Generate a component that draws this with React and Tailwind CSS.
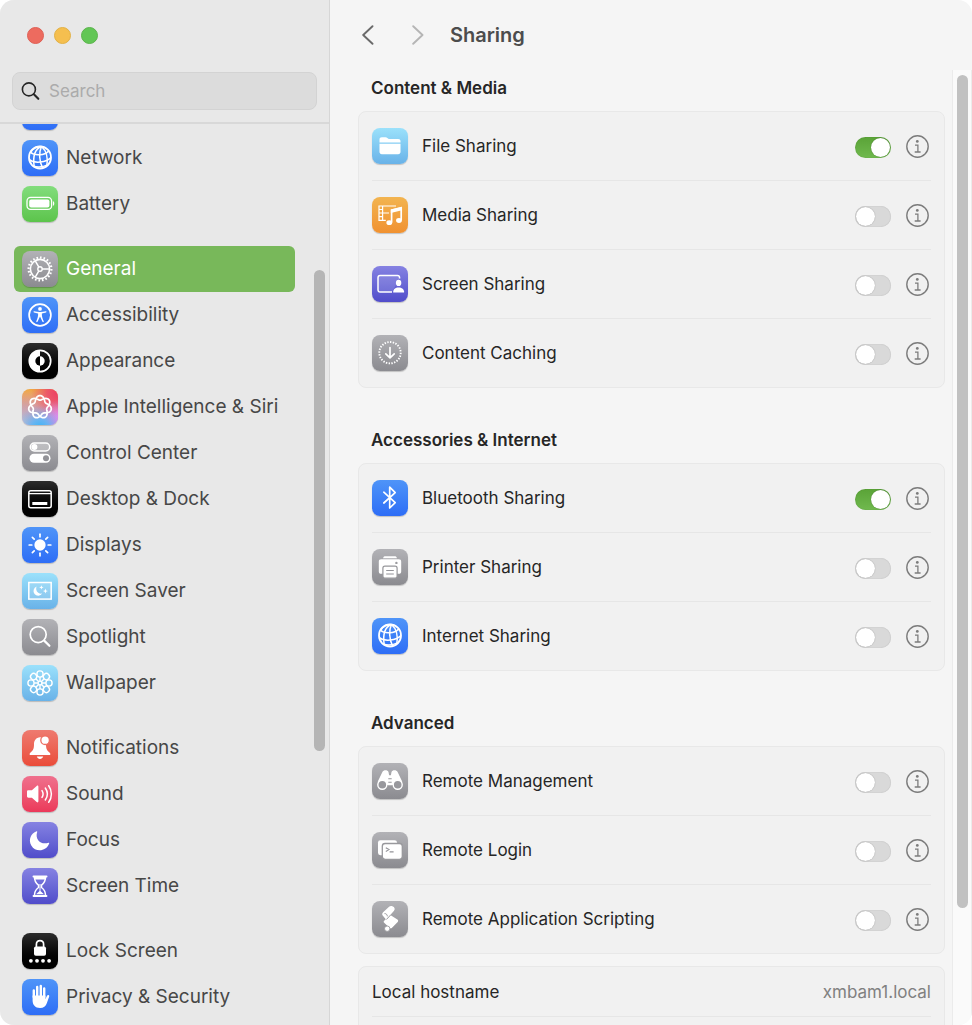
import React, { useState } from 'react';

const tones = {
  blue: 'from-[#4f94f8] to-[#2e6df6]',
  green: 'from-[#82dd7c] to-[#5cc44b]',
  gray: 'from-[#b2b2b6] to-[#8b8b90]',
  black: 'from-[#2c2c2c] to-black',
  cyan: 'from-[#9be1fb] to-[#69b2e8]',
  red: 'from-[#ee7a6f] to-[#ea4b39]',
  pink: 'from-[#ef708d] to-[#eb385a]',
  indigo: 'from-[#8682e2] to-[#514cca]',
  orange: 'from-[#f2b450] to-[#f09130]',
  siri: 'from-[#f0a93e] to-[#c77ee8]',
};

const petals = [0, 45, 90, 135, 180, 225, 270, 315];

// One curve wound twice round the centre, which crosses itself seven times
const siriPath = (() => {
  const points = [];
  for (let i = 0; i <= 168; i++) {
    const t = (i / 168) * Math.PI * 4;
    const r = 9.2 + 2.3 * Math.cos(3.5 * t);
    points.push(`${(18 + r * Math.sin(t)).toFixed(2)} ${(18 - r * Math.cos(t)).toFixed(2)}`);
  }
  return `M${points.join('L')}Z`;
})();

const Globe = () => (
  <g fill="none" stroke="white" strokeWidth="1.5">
    <circle cx="18" cy="17.5" r="11" strokeWidth="1.8" />
    <path d="M19.5 6.5C14 8.5 10.5 15 12.2 26.7M19.5 6.5C16.8 12 17 21 20.6 28M19.5 6.5C24 10.5 26.2 18 24.8 25.8M19.5 6.5C14.5 6.5 10.5 9 8.6 12" />
    <path d="M8.4 12.3C12.5 16 22.5 15.6 26.6 10.9M7.2 19.6C12 23.6 24.5 22.8 28.9 17.6M11 25.9C15 27.6 21.5 27 26.2 24.6" />
  </g>
);

const glyphs = {
  globe: <Globe />,
  bluetooth: (
    <path d="M11.8 12.2L23.2 22.6L17.7 28V7.2L23.2 12.6L11.8 23" fill="none" stroke="white" strokeWidth="1.7" strokeLinejoin="round" strokeLinecap="round" />
  ),
  battery: (
    <g fill="white">
      <rect x="5" y="11.4" width="24.6" height="12" rx="3.6" fill="none" stroke="white" strokeWidth="1.3" />
      <rect x="7.2" y="13.4" width="20.2" height="8" rx="2" />
      <path d="M31 15.2c1.7.5 1.7 4 0 4.5z" />
    </g>
  ),
  gear: (
    <g fill="none" stroke="white">
      <circle cx="18" cy="18" r="9.6" strokeWidth="1.6" />
      <circle cx="18" cy="18" r="11.4" strokeWidth="2.2" pathLength="40" strokeDasharray="0.9 1.1" />
      <circle cx="18" cy="18" r="2.2" strokeWidth="1.4" />
      <path d="M20.2 18H27.6M16.9 16.1L13.1 9.6M16.9 19.9L13.1 26.4" strokeWidth="1.5" />
    </g>
  ),
  accessibility: (
    <g fill="white">
      <circle cx="18" cy="18" r="10.9" fill="none" stroke="white" strokeWidth="1.7" />
      <circle cx="18" cy="11.9" r="1.9" />
      <path d="M12.2 14.3c-.8-.2-1 .9-.3 1.1l4.2 1.2c.3 2.4-.6 5-1.8 7.7-.3.9.8 1.3 1.2.5L18 19.6l2.5 5.2c.4.8 1.5.4 1.2-.5-1.2-2.7-2.1-5.3-1.8-7.7l4.2-1.2c.7-.2.5-1.3-.3-1.1-3.9.8-7.7.8-11.6 0z" />
    </g>
  ),
  appearance: (
    <g>
      <circle cx="18" cy="18" r="10.7" fill="none" stroke="white" strokeWidth="1.7" />
      <path d="M18 7.5a10.5 10.5 0 0 0 0 21z" fill="white" />
      <path d="M18 13.3a4.7 4.7 0 0 0 0 9.4z" fill="black" />
      <path d="M18 13.3a4.7 4.7 0 0 1 0 9.4z" fill="white" />
    </g>
  ),
  siri: (
    <g>
      <defs>
        <radialGradient id="siriRed" cx="1" cy="0.1" r="0.75">
          <stop offset="0" stopColor="#ec3f63" />
          <stop offset="0.4" stopColor="#ec4f68" stopOpacity="0.9" />
          <stop offset="1" stopColor="#ec5a62" stopOpacity="0" />
        </radialGradient>
        <radialGradient id="siriBlue" cx="0.5" cy="1.1" r="0.65">
          <stop offset="0" stopColor="#35b5f8" />
          <stop offset="0.4" stopColor="#62b6f4" stopOpacity="0.9" />
          <stop offset="1" stopColor="#8fa8dd" stopOpacity="0" />
        </radialGradient>
        <radialGradient id="siriGray" cx="0" cy="1" r="0.8">
          <stop offset="0" stopColor="#b4d3dd" />
          <stop offset="1" stopColor="#c4a89a" stopOpacity="0" />
        </radialGradient>
        <radialGradient id="siriPink" cx="1" cy="0.8" r="0.5">
          <stop offset="0" stopColor="#e58af5" />
          <stop offset="1" stopColor="#d98af0" stopOpacity="0" />
        </radialGradient>
      </defs>
      <rect width="36" height="36" fill="url(#siriRed)" />
      <rect width="36" height="36" fill="url(#siriGray)" />
      <rect width="36" height="36" fill="url(#siriPink)" />
      <rect width="36" height="36" fill="url(#siriBlue)" />
      <path d={siriPath} fill="none" stroke="white" strokeWidth="1.7" />
    </g>
  ),
  control: (
    <g>
      <rect x="8.3" y="8" width="19.4" height="8" rx="4" fill="white" fillOpacity="0.25" stroke="white" strokeWidth="1.5" />
      <circle cx="12.4" cy="12" r="3" fill="white" />
      <rect x="7.5" y="18.8" width="21" height="9" rx="4.5" fill="white" />
      <circle cx="24" cy="23.3" r="3" fill="#929297" />
    </g>
  ),
  dock: (
    <g fill="none" stroke="white">
      <rect x="6.8" y="9.7" width="22.4" height="17" rx="2" strokeWidth="1.5" />
      <path d="M7 12.6H29" strokeWidth="1.2" />
      <path d="M10.3 22.5H25.3" strokeWidth="3.2" />
    </g>
  ),
  sun: (
    <g fill="white" stroke="white" strokeWidth="1.7" strokeLinecap="round">
      <circle cx="18" cy="18" r="4.8" />
      {petals.map((angle) => (
        <path key={angle} d="M18 7.2V9.8" transform={`rotate(${angle} 18 18)`} />
      ))}
    </g>
  ),
  saver: (
    <g fill="white">
      <rect x="6.8" y="9.5" width="22.4" height="16.6" fill="white" fillOpacity="0.15" stroke="white" strokeWidth="1.5" />
      <path d="M14.6 13.6a4.7 4.7 0 1 0 5.6 6.9c-3.9 1-7.2-2.8-5.6-6.9z" />
      <path d="M19.4 12.2l.6 1.6 1.6.6-1.6.6-.6 1.6-.6-1.6-1.6-.6 1.6-.6zM23.4 15.6l.7 1.8 1.8.7-1.8.7-.7 1.8-.7-1.8-1.8-.7 1.8-.7z" />
    </g>
  ),
  search: (
    <g fill="none" stroke="white" strokeLinecap="round">
      <circle cx="16.2" cy="15.6" r="8" strokeWidth="1.7" />
      <path d="M22.2 21.6L27.4 26.8" strokeWidth="2.2" />
    </g>
  ),
  flower: (
    <g fill="none" stroke="white" strokeWidth="1.4">
      {petals.map((angle) => (
        <g key={angle} transform={`rotate(${angle} 18 18)`}>
          <circle cx="18" cy="9" r="3.1" />
          <path d="M18 12.1V16.2" />
        </g>
      ))}
      <circle cx="18" cy="18" r="1.9" />
    </g>
  ),
  bell: (
    <g fill="white">
      <path d="M18 7.2c-3.9.3-6 3.2-6 7 0 4.4-.8 5.9-3.2 8-1.7 1.5-1.6 2.9.2 2.9h18c1.8 0 1.9-1.4.2-2.9-2.4-2.1-3.2-3.6-3.2-8 0-3.8-2.100-6.700-6-7z" />
      <path d="M14.800 26.600h6.400c-.9 3.200-5.500 3.200-6.400 0z" />
      <circle cx="23.100" cy="10.200" r="4.300" stroke="#ed6e62" strokeWidth="1.300" />
    </g>
  ),
  sound: (
    <g fill="white">
      <path d="M6.5 14.3h3.4l4.8-4.3c.9-.7 1.7-.4 1.7.7v14.600c0 1.100-.8 1.400-1.700.7l-4.800-4.300H6.500c-1 0-1.500-.5-1.500-1.400v-4.600c0-.9.5-1.400 1.500-1.400z" />
      <path d="M20 14.600c1.300 2 1.300 4.800 0 6.800M23.300 12c2.500 3.600 2.500 8.400 0 12M26.700 9.700c3.600 5 3.600 11.600 0 16.600" fill="none" stroke="white" strokeWidth="1.500" strokeLinecap="round" />
    </g>
  ),
  moon: (
    <path d="M14.600 9.200c.5-.2.8.2.6.7-2.500 7.200 3.300 13.200 11.200 10.900.6-.2 1 .2.8.7C24 29.900 13.400 30.500 9.300 23.400c-3.300-5.800-.3-12.200 5.300-14.200z" fill="white" />
  ),
  hourglass: (
    <g fill="none" stroke="white" strokeWidth="1.500">
      <path d="M11.500 8.500H24.500" strokeWidth="2" strokeLinecap="round" />
      <path d="M11.500 28H24.500" strokeWidth="1.800" strokeLinecap="round" />
      <path d="M12.400 8.500c0 5 1.800 7 4.100 8.600v2.400c-2.300 1.600-4.100 3.600-4.100 8.500M23.600 8.500c0 5-1.800 7-4.100 8.600v2.400c2.300 1.600 4.100 3.600 4.100 8.500" />
      <path d="M12.500 8.800h11v2.700h-11zM17.500 16h1v7l3.500 3.200h-8l3.500-3.200z" fill="white" stroke="none" />
    </g>
  ),
  lock: (
    <g fill="white">
      <rect x="12" y="13.400" width="12" height="9.400" rx="1.800" />
      <path d="M14.400 14v-2.800c0-4.900 7.200-4.900 7.200 0V14" fill="none" stroke="white" strokeWidth="1.700" />
      <circle cx="8.900" cy="27.800" r="1.900" />
      <circle cx="15" cy="27.800" r="1.900" />
      <circle cx="21" cy="27.800" r="1.900" />
      <circle cx="27.100" cy="27.800" r="1.900" />
    </g>
  ),
  hand: (
    <g fill="none" stroke="white" strokeWidth="2.400" strokeLinecap="round">
      <path d="M11.800 18V11.400M15.200 17V8M18.800 17V7M22.200 18V9.500" />
      <path d="M10.600 16.500h12.800v3.800l1.600-3.500c.7-1.400 2.600-.8 2.200.7l-2.300 6.500c-1.200 3.300-3.300 5-6.800 5-5 0-7.500-3.300-7.500-7.500z" fill="white" stroke="none" />
    </g>
  ),
  folder: (
    <g fill="white">
      <path d="M7.500 14.600v-3c0-1.600.8-2.400 2.400-2.400h3.600c1.800 0 2 1.700 3.800 1.700h8.800c1.600 0 2.400.8 2.400 2.400v1.300z" />
      <path d="M7.500 15.800h21v8c0 1.600-.8 2.400-2.400 2.400H9.900c-1.600 0-2.400-.8-2.400-2.400z" />
    </g>
  ),
  media: (
    <g fill="none" stroke="white" strokeWidth="1.200">
      <path d="M24 9H7v14.300h6.800M10.600 9v14.300M10.600 16h6.400M7 12.500h3.600M7 16h3.600M7 19.700h3.600" />
      <path d="M19.600 25.500V13.200l9.600-2.400v12.400" strokeWidth="1.700" />
      <path d="M18.800 12.500l11.200-2.800v3.600l-11.200 2.800z" fill="white" stroke="none" />
      <ellipse cx="17.300" cy="25.700" rx="2.900" ry="2.400" fill="white" stroke="none" />
      <ellipse cx="27" cy="23.500" rx="2.900" ry="2.400" fill="white" stroke="none" />
    </g>
  ),
  screen: (
    <g fill="white">
      <path d="M20 26H8.200c-1.400 0-2.200-.8-2.200-2.200V11.700c0-1.400.8-2.200 2.200-2.200h17.200c1.400 0 2.200.8 2.200 2.200v.8" fill="white" fillOpacity="0.120" stroke="white" strokeWidth="1.500" />
      <ellipse cx="26.600" cy="16.900" rx="2.700" ry="3.100" />
      <path d="M21.200 26.600c-.4-3.500 2.400-5.200 5.400-5.200s5.900 1.700 5.500 5.200z" />
    </g>
  ),
  caching: (
    <g fill="none" stroke="white">
      <circle cx="18" cy="17.700" r="10.700" strokeWidth="1.900" pathLength="48" strokeDasharray="1 1" />
      <path d="M18 12.500V22.600M13.800 18.800L18 22.800L22.200 18.800" strokeWidth="1.700" strokeLinecap="round" strokeLinejoin="round" />
    </g>
  ),
  printer: (
    <g fill="white">
      <path d="M11 9.300c.3-1.500 1-2.100 2.400-2.100h9.200c1.400 0 2.100.6 2.400 2.100z" />
      <path d="M9.200 10.300h17.600c1.600 0 2.400.8 2.400 2.400v9.700c0 1.600-.8 2.400-2.400 2.400H9.200c-1.600 0-2.400-.8-2.400-2.400v-9.700c0-1.600.8-2.400 2.400-2.400z" />
      <rect x="10.900" y="17.200" width="14.200" height="12" rx="2" stroke="#96969a" strokeWidth="1.200" />
      <circle cx="24.400" cy="13.900" r="1.200" fill="#9b9b9f" />
      <path d="M14.200 21.500h7.600M14.200 25h7.600" stroke="#949499" strokeWidth="1.100" />
    </g>
  ),
  binoculars: (
    <g fill="white">
      <path d="M10.500 8.800c.9-2.200 5.300-2.200 6 .2l.6 3.200h1.800l.6-3.200c.7-2.400 5.100-2.400 6-.2l4.800 10-6.800 2-3.500 1.500h-4l-3.500-1.500-6.800-2z" />
      <circle cx="10.300" cy="21.800" r="4.500" fill="#98989d" stroke="white" strokeWidth="1.400" />
      <circle cx="25.700" cy="21.800" r="4.500" fill="#98989d" stroke="white" strokeWidth="1.400" />
      <path d="M16.300 15.700h3.400M16.300 19.300h3.400" stroke="#98989c" strokeWidth="1.100" />
    </g>
  ),
  terminal: (
    <g fill="white">
      <rect x="6" y="8.200" width="19" height="15" rx="2.400" />
      <rect x="10.300" y="11.500" width="20" height="15.800" rx="2.800" stroke="#98989c" strokeWidth="1.300" />
      <path d="M13.800 15.700l3.200 1.900-3.200 1.900M17.600 19.900h4" fill="none" stroke="#939398" strokeWidth="1.100" />
    </g>
  ),
  script: (
    <g fill="white">
      <path d="M10.500 14.200c-.6-1-.3-2 .6-2.900l5.700-5.300c1-.9 2.300-1.100 3.600-.7 2.300.7 3 2.900 1.600 4.500l-3.700 4.300 7.100 4.500c.9.600 1 1.500.3 2.300l-5.900 6.100c-.7.7-1.500.6-2.200 0l-5.400-5.200c-.7-.7-.7-1.300 0-2l1.600-1.500z" />
      <path d="M12.500 12.600c1.600-.2 2.900 1.100 2.800 2.700M18.700 13.900l-4.300 4.600" fill="none" stroke="#9a9a9e" strokeWidth="1" />
      <circle cx="15.200" cy="27.700" r="2.700" stroke="#929297" strokeWidth="0.800" />
    </g>
  ),
};

const Tile = ({ tone, glyph }) => (
  <span className={`block size-9 shrink-0 overflow-hidden rounded-lg bg-linear-to-b shadow-[0_1px_1px_rgba(0,0,0,0.2)] ${tones[tone]}`}>
    <svg viewBox="0 0 36 36" className="block size-9" aria-hidden="true">
      {glyphs[glyph]}
    </svg>
  </span>
);

const sidebarGroups = [
  [
    { name: 'Bluetooth', tone: 'blue', glyph: 'bluetooth', iconOnly: true },
    { name: 'Network', tone: 'blue', glyph: 'globe' },
    { name: 'Battery', tone: 'green', glyph: 'battery' },
  ],
  [
    { name: 'General', tone: 'gray', glyph: 'gear' },
    { name: 'Accessibility', tone: 'blue', glyph: 'accessibility' },
    { name: 'Appearance', tone: 'black', glyph: 'appearance' },
    { name: 'Apple Intelligence & Siri', tone: 'siri', glyph: 'siri' },
    { name: 'Control Center', tone: 'gray', glyph: 'control' },
    { name: 'Desktop & Dock', tone: 'black', glyph: 'dock' },
    { name: 'Displays', tone: 'blue', glyph: 'sun' },
    { name: 'Screen Saver', tone: 'cyan', glyph: 'saver' },
    { name: 'Spotlight', tone: 'gray', glyph: 'search' },
    { name: 'Wallpaper', tone: 'cyan', glyph: 'flower' },
  ],
  [
    { name: 'Notifications', tone: 'red', glyph: 'bell' },
    { name: 'Sound', tone: 'pink', glyph: 'sound' },
    { name: 'Focus', tone: 'indigo', glyph: 'moon' },
    { name: 'Screen Time', tone: 'indigo', glyph: 'hourglass' },
  ],
  [
    { name: 'Lock Screen', tone: 'black', glyph: 'lock' },
    { name: 'Privacy & Security', tone: 'blue', glyph: 'hand' },
  ],
];

const sections = [
  {
    title: 'Content & Media',
    rows: [
      { id: 'file', name: 'File Sharing', tone: 'cyan', glyph: 'folder' },
      { id: 'media', name: 'Media Sharing', tone: 'orange', glyph: 'media' },
      { id: 'screen', name: 'Screen Sharing', tone: 'indigo', glyph: 'screen' },
      { id: 'caching', name: 'Content Caching', tone: 'gray', glyph: 'caching' },
    ],
  },
  {
    title: 'Accessories & Internet',
    rows: [
      { id: 'bluetooth', name: 'Bluetooth Sharing', tone: 'blue', glyph: 'bluetooth' },
      { id: 'printer', name: 'Printer Sharing', tone: 'gray', glyph: 'printer' },
      { id: 'internet', name: 'Internet Sharing', tone: 'blue', glyph: 'globe' },
    ],
  },
  {
    title: 'Advanced',
    rows: [
      { id: 'management', name: 'Remote Management', tone: 'gray', glyph: 'binoculars' },
      { id: 'login', name: 'Remote Login', tone: 'gray', glyph: 'terminal' },
      { id: 'scripting', name: 'Remote Application Scripting', tone: 'gray', glyph: 'script' },
    ],
  },
];

const Sidebar = ({ active, onSelect }) => (
  <aside className="relative flex w-[330px] shrink-0 flex-col border-r border-[#d6d6d6] bg-[#e8e8e8]">
    <div className="flex h-[124px] shrink-0 flex-col border-b-2 border-[#d8d8d8]">
      <div className="flex gap-[10px] px-[27px] pt-[27px]">
        <button aria-label="Close" className="size-[17px] rounded-full border border-[#de6055] bg-[#ed6b5f]"></button>
        <button aria-label="Minimize" className="size-[17px] rounded-full border border-[#e2b145] bg-[#f5bf4f]"></button>
        <button aria-label="Zoom" className="size-[17px] rounded-full border border-[#5bb44c] bg-[#62c655]"></button>
      </div>
      <div className="mx-3 mt-7 flex h-[38px] items-center gap-2 rounded-lg border border-[#d3d3d3] bg-[#dcdcdc] px-2">
        <svg viewBox="0 0 20 20" className="size-5 shrink-0" fill="none" stroke="#262626" strokeLinecap="round" aria-hidden="true">
          <circle cx="7.900" cy="8.400" r="6.500" strokeWidth="1.600" />
          <path d="M12.800 13.300L17.300 17.800" strokeWidth="2.100" />
        </svg>
        <input
          type="text"
          aria-label="Search"
          placeholder="Search"
          className="min-w-0 flex-1 bg-transparent text-[17px] leading-6 outline-none placeholder:text-[#ababab]"
        />
      </div>
    </div>

    <nav className="min-h-0 flex-1 overflow-hidden pr-[34px] pl-[14px]">
      {/* The list is scrolled down, so its first row is cut by the header */}
      <div className="-mt-[35px] flex flex-col gap-[19px]">
        {sidebarGroups.map((group) => (
          <div key={group[0].name}>
            {group.map((item) => (
              <a
                key={item.name}
                href="#"
                aria-label={item.name}
                onClick={() => onSelect(item.name)}
                className={`flex h-[46px] items-center gap-2 rounded-md px-2 text-[19px] leading-6 whitespace-nowrap ${
                  active === item.name ? 'bg-[#78b85a] text-white' : 'text-[#474747]'
                }`}
              >
                <Tile tone={item.tone} glyph={item.glyph} />
                {!item.iconOnly && item.name}
              </a>
            ))}
          </div>
        ))}
      </div>
    </nav>

    <div className="absolute top-[270px] right-1 h-[481px] w-[11px] rounded-full bg-[#b5b5b5]"></div>
  </aside>
);

const SharingRow = ({ row, checked, onToggle }) => (
  <div className="flex h-[69px] items-center border-t border-[#e6e6e6] first:h-[68px] first:border-t-0">
    <Tile tone={row.tone} glyph={row.glyph} />
    <label htmlFor={row.id} className="ml-[14px] flex-1 text-[17px] leading-6 text-[#262626]">
      {row.name}
    </label>
    <input
      type="checkbox"
      role="switch"
      id={row.id}
      checked={checked}
      onChange={onToggle}
      className="mt-[2px] flex h-[21px] w-9 appearance-none items-center rounded-full bg-[#d9d9d9] p-px shadow-[inset_0_0_1px_rgba(0,0,0,0.25)] before:block before:size-[19px] before:rounded-full before:bg-white before:shadow-[0_0_1px_rgba(0,0,0,0.4)] checked:justify-end checked:bg-linear-to-b checked:from-[#5aa337] checked:to-[#70b94e]"
    />
    <button aria-label={`About ${row.name}`} className="mr-[2px] ml-[15px]">
      <svg viewBox="0 0 23 23" className="block size-[23px]" fill="none" stroke="#7c7c7c" aria-hidden="true">
        <circle cx="11.500" cy="11.500" r="10.700" strokeWidth="1.400" />
        <circle cx="11.300" cy="6.400" r="1.400" fill="#7c7c7c" stroke="none" />
        <path d="M9 10.100H11.900V16.800M8.700 17H14.600" strokeWidth="1.300" />
      </svg>
    </button>
  </div>
);

const App = () => {
  const [active, setActive] = useState('General');
  const [enabled, setEnabled] = useState({ file: true, bluetooth: true });

  const toggle = (id) => setEnabled((prev) => ({ ...prev, [id]: !prev[id] }));

  return (
    <div className="h-screen bg-white font-['Inter','Liberation_Sans',sans-serif] [font-optical-sizing:none]">
      <div className="flex h-full overflow-hidden rounded-[14px] bg-[#f5f5f5]">
        <Sidebar active={active} onSelect={setActive} />

        <main className="flex min-w-0 flex-1 flex-col">
          <header className="flex h-[70px] shrink-0 items-center pl-8">
            <button aria-label="Back">
              <svg viewBox="0 0 12 20" className="block h-5 w-3" fill="none" stroke="#6a6a6a" strokeWidth="1.900" strokeLinecap="round" strokeLinejoin="round">
                <path d="M10.500 1.200L1.200 10L10.500 18.800" />
              </svg>
            </button>
            <button aria-label="Forward" className="ml-[38px]">
              <svg viewBox="0 0 12 20" className="block h-5 w-3" fill="none" stroke="#b5b5b5" strokeWidth="1.900" strokeLinecap="round" strokeLinejoin="round">
                <path d="M1.200 1.200L10.500 10L1.200 18.800" />
              </svg>
            </button>
            <h1 className="ml-[26px] text-[20px] leading-6 font-semibold text-[#4c4c4c]">Sharing</h1>
          </header>

          <div className="flex min-h-0 flex-1">
            <div className="flex min-w-0 flex-1 flex-col overflow-hidden pt-[6px] pr-[7px] pl-7">
              {sections.map((section) => (
                <section key={section.title} className="mb-10 shrink-0 last-of-type:mb-3">
                  <h2 className="mb-[11px] pl-[13px] text-[17px] leading-6 font-semibold text-[#262626]">{section.title}</h2>
                  <div className="rounded-lg border border-[#e8e8e8] bg-[#f1f1f1] px-[13px]">
                    {section.rows.map((row) => (
                      <SharingRow key={row.id} row={row} checked={!!enabled[row.id]} onToggle={() => toggle(row.id)} />
                    ))}
                  </div>
                </section>
              ))}

              <div className="shrink-0 rounded-lg border border-[#e8e8e8] bg-[#f1f1f1] px-[13px]">
                <dl className="flex h-[50px] items-center justify-between border-b border-[#e6e6e6] text-[17px] leading-6">
                  <dt className="text-[#262626]">Local hostname</dt>
                  <dd className="text-[#808080]">xmbam1.local</dd>
                </dl>
                <div className="h-[50px]"></div>
              </div>
            </div>

            {/* Scroll bar */}
            <div className="w-5 shrink-0 border-x border-[#ebebeb] bg-[#fafafa] pt-[5px] pl-1">
              <div className="h-[833px] w-[11px] rounded-full bg-[#c1c1c1]"></div>
            </div>
          </div>
        </main>
      </div>
    </div>
  );
};

export default App;
